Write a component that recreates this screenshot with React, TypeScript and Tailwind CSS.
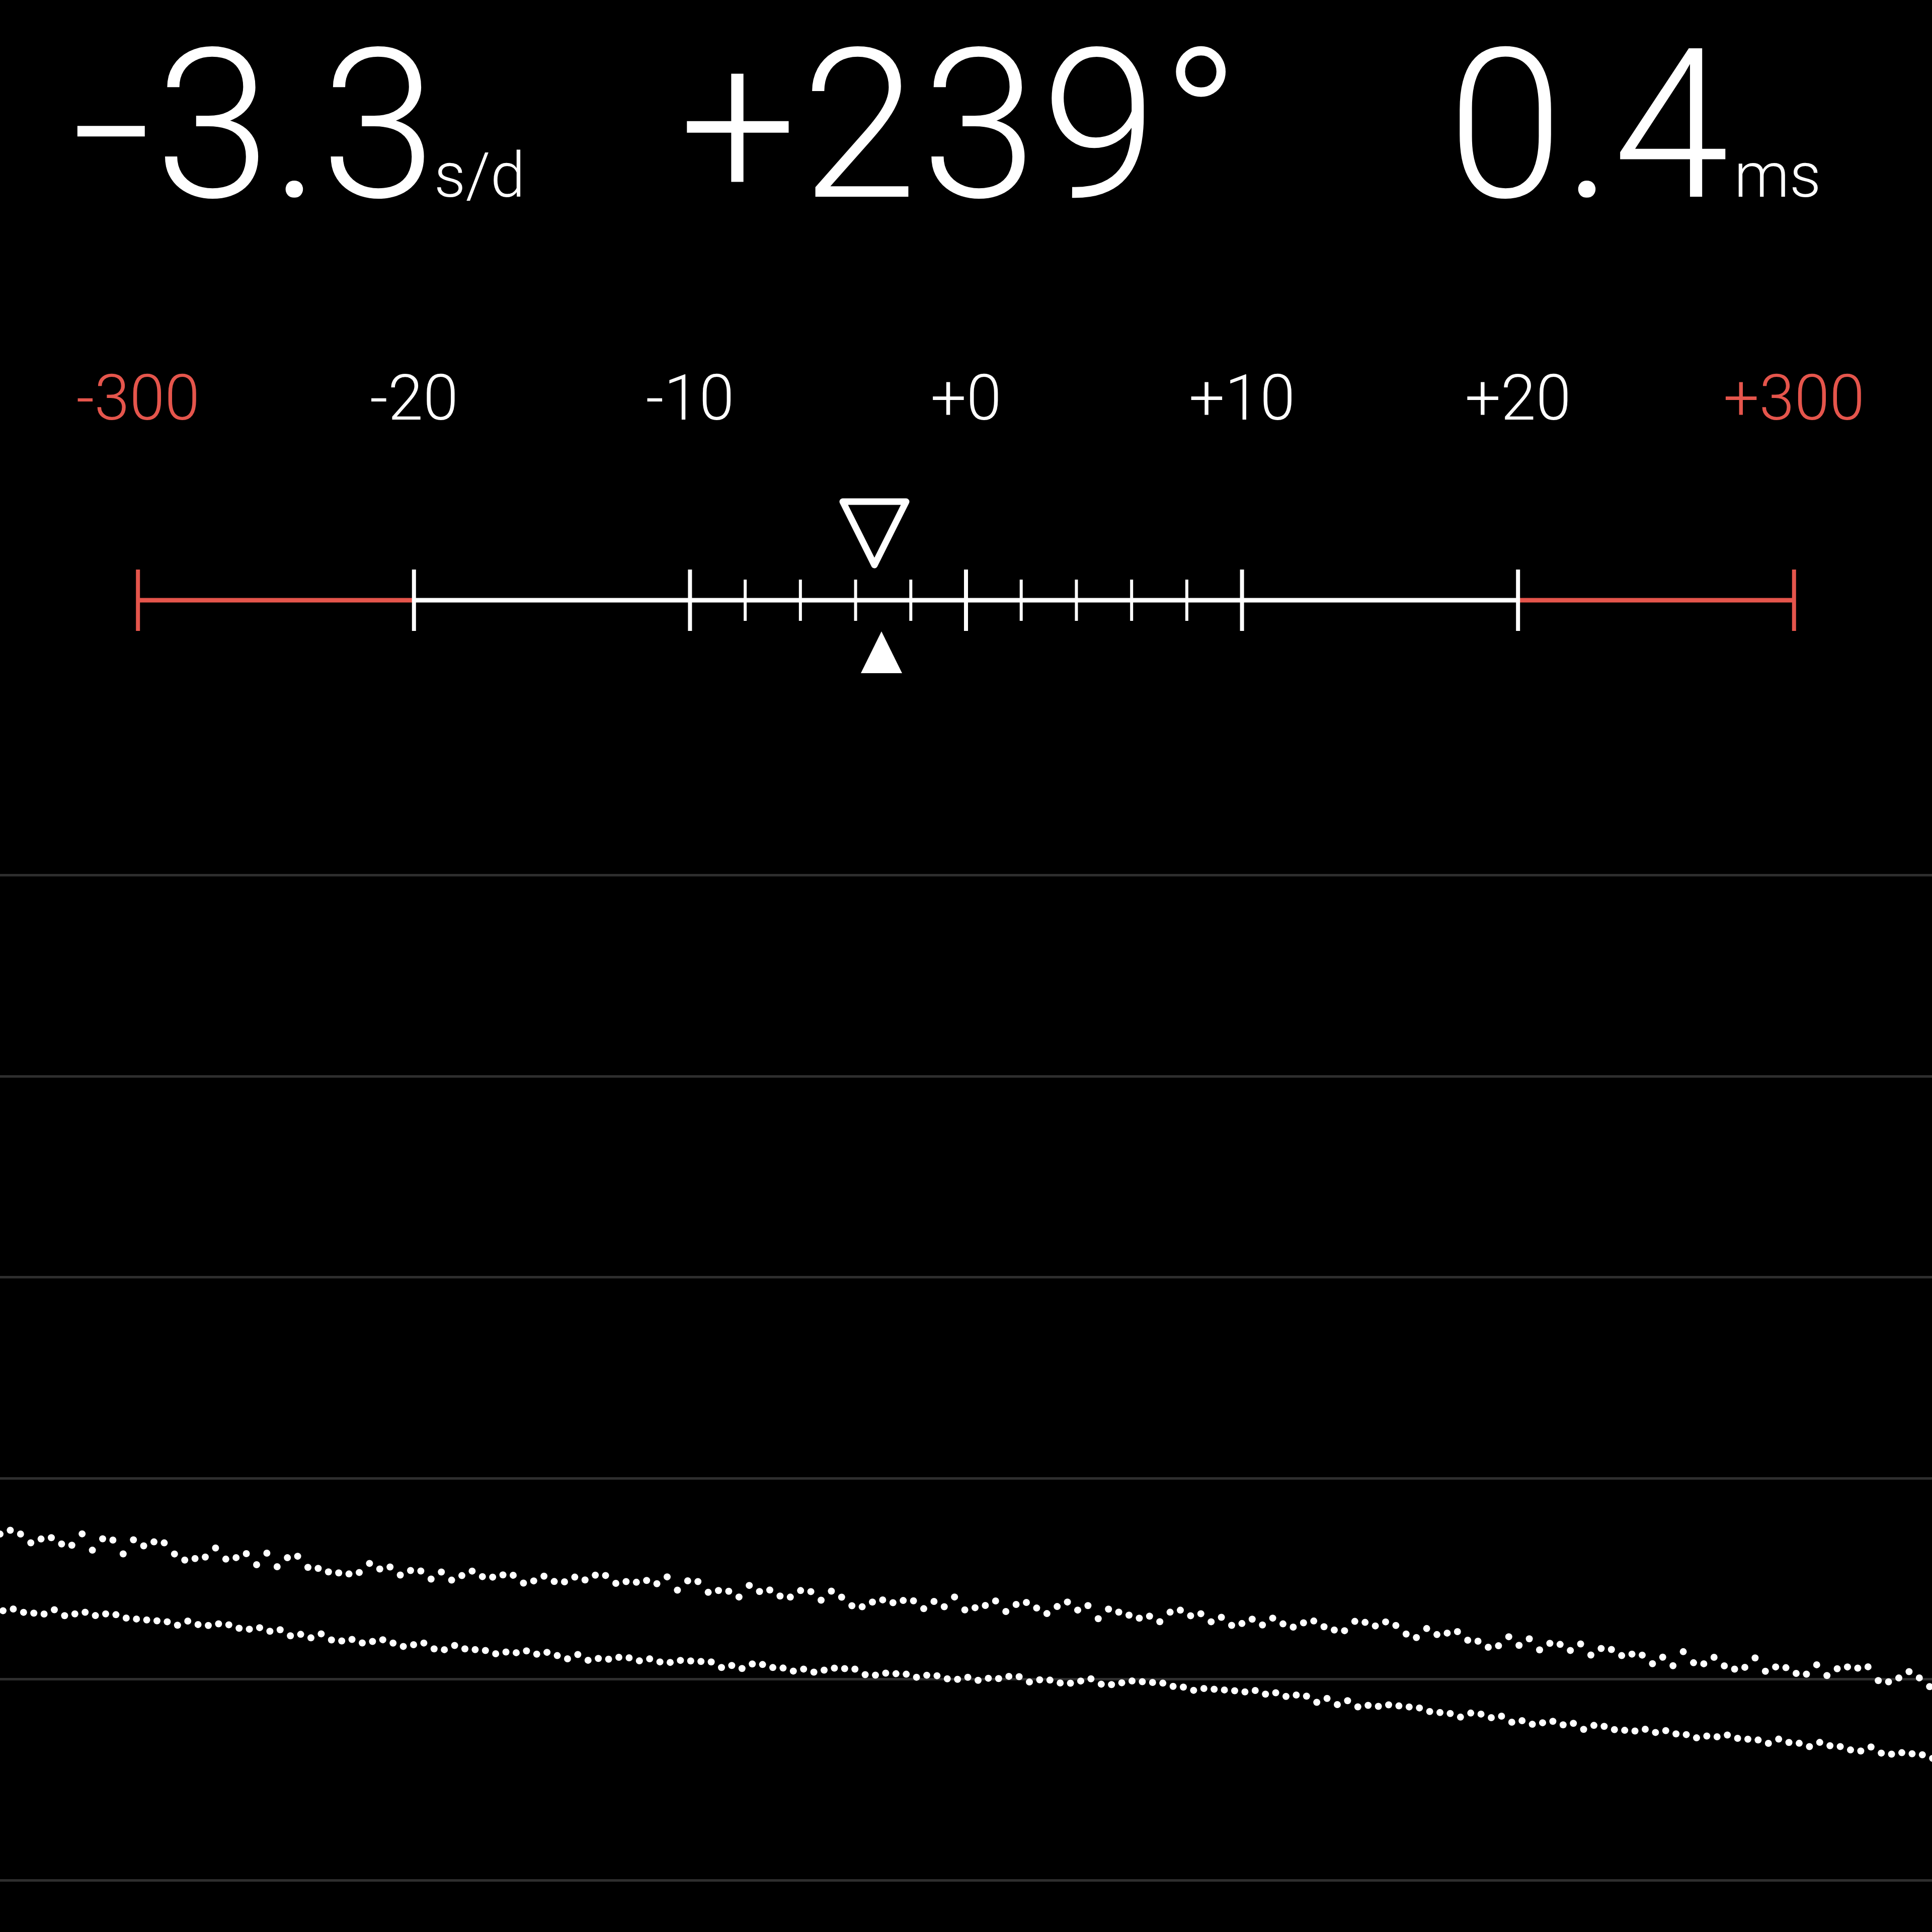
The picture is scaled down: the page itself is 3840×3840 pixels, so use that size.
import React from "react";

const RED = "#e5554c";
const STEP = 548.6;
const CX = 1920;

const labels = [
  { text: "-300", red: true },
  { text: "-20", red: false },
  { text: "-10", red: false },
  { text: "+0", red: false },
  { text: "+10", red: false },
  { text: "+20", red: false },
  { text: "+300", red: true },
];

// trend of each dot row, in 1568-wide screen units
const topTrend = [
  [0, 1243], [100, 1255], [200, 1265], [300, 1275], [400, 1280], [500, 1283],
  [600, 1290], [700, 1300], [800, 1303], [900, 1308], [1000, 1313], [1100, 1320],
  [1200, 1330], [1300, 1340], [1400, 1350], [1500, 1357], [1568, 1365],
];
const bottomTrend = [
  [0, 1305], [100, 1313], [200, 1322], [300, 1332], [400, 1340], [500, 1347],
  [600, 1352], [700, 1357], [800, 1362], [900, 1365], [1000, 1372], [1100, 1383],
  [1200, 1393], [1300, 1403], [1400, 1410], [1500, 1418], [1568, 1425],
];

const K = 3840 / 1568;
const CHART_TOP = 1737;

function lerp(trend: number[][], x: number) {
  const u = x / K;
  for (let i = 1; i < trend.length; i++) {
    if (u <= trend[i][0]) {
      const [x0, y0] = trend[i - 1];
      const [x1, y1] = trend[i];
      return (y0 + ((u - x0) / (x1 - x0)) * (y1 - y0)) * K;
    }
  }
  return trend[trend.length - 1][1] * K;
}

function makeRand(seed: number) {
  let s = seed;
  return () => {
    s = (s * 1103515245 + 12345) % 2147483648;
    return s / 2147483648;
  };
}

function makeDots(trend: number[][], seed: number, spread: number, offset: number) {
  const rand = makeRand(seed);
  const dots: { x: number; y: number }[] = [];
  for (let x = offset; x < 3850; x += 20.4) {
    const j = Math.round((rand() - 0.5) * spread) * 5;
    dots.push({ x, y: lerp(trend, x) + j - CHART_TOP });
  }
  return dots;
}

const topDots = makeDots(topTrend, 7, 6, 0);
const bottomDots = makeDots(bottomTrend, 19, 2.4, 6);

function Scale() {
  const majors = [-3, -2, -1, 0, 1, 2, 3];
  const minors = [-4, -3, -2, -1, 1, 2, 3, 4];
  const y = 208;
  return (
    <svg width="3840" height="360" viewBox="0 0 3840 360" className="block">
      <line x1={CX - 3 * STEP} y1={y} x2={CX - 2 * STEP} y2={y} stroke={RED} strokeWidth="9" />
      <line x1={CX - 2 * STEP} y1={y} x2={CX + 2 * STEP} y2={y} stroke="#fff" strokeWidth="9" />
      <line x1={CX + 2 * STEP} y1={y} x2={CX + 3 * STEP} y2={y} stroke={RED} strokeWidth="9" />
      {majors.map((m) => (
        <line
          key={m}
          x1={CX + m * STEP}
          y1={y - 61}
          x2={CX + m * STEP}
          y2={y + 61}
          stroke={Math.abs(m) === 3 ? RED : "#fff"}
          strokeWidth="8"
        />
      ))}
      {minors.map((m) => (
        <line
          key={m}
          x1={CX + (m * STEP) / 5}
          y1={y - 41}
          x2={CX + (m * STEP) / 5}
          y2={y + 41}
          stroke="#fff"
          strokeWidth="6"
        />
      ))}
      <polygon
        points="1675,12 1801,12 1738,138"
        fill="none"
        stroke="#fff"
        strokeWidth="13"
        strokeLinejoin="round"
      />
      <polygon points="1752,270 1793,353 1711,353" fill="#fff" />
    </svg>
  );
}

export default function App() {
  return (
    <div className="w-[3840px] h-[3840px] bg-black text-white font-['Roboto','Helvetica_Neue',sans-serif] font-light overflow-hidden">
      <div className="flex pl-[128px] h-[732px]">
        <div className="flex items-baseline w-[1222px]">
          <span className="text-[415px] leading-[1.2]">
            <span className="inline-block origin-left scale-x-[1.38] ml-[12px] mr-[49px]">-</span>
            3.3
          </span>
          <span className="text-[124px] leading-[1.2] -ml-[5px]">s/d</span>
        </div>
        <div className="flex items-baseline w-[1527px]">
          <span className="text-[415px] leading-[1.2] tracking-[0.02em]">+239°</span>
        </div>
        <div className="flex items-baseline w-[900px]">
          <span className="text-[415px] leading-[1.2]">0.4</span>
          <span className="text-[124px] leading-[1.2] ml-[10px]">ms</span>
        </div>
      </div>
      <div className="flex h-[253px] -mt-[16px] pb-[16px] box-content">
        {labels.map((l) => (
          <div
            key={l.text}
            className={`w-[548.6px] text-center text-[126px] leading-[1.2] ${l.red ? "text-[#e5554c]" : "text-white"}`}
          >
            {l.text}
          </div>
        ))}
      </div>
      <Scale />
      <div className="relative mt-[392px]">
        {[0, 1, 2, 3, 4, 5].map((i) => (
          <div key={i} className="h-[399.5px] border-t-[5px] border-[#2e2e2e]" />
        ))}
        <svg width="3840" height="2000" viewBox="0 0 3840 2000" className="absolute left-0 top-0">
          {topDots.map((d, i) => (
            <circle key={`t${i}`} cx={d.x} cy={d.y} r="7" fill="#fff" />
          ))}
          {bottomDots.map((d, i) => (
            <circle key={`b${i}`} cx={d.x} cy={d.y} r="7" fill="#fff" />
          ))}
        </svg>
      </div>
    </div>
  );
}
